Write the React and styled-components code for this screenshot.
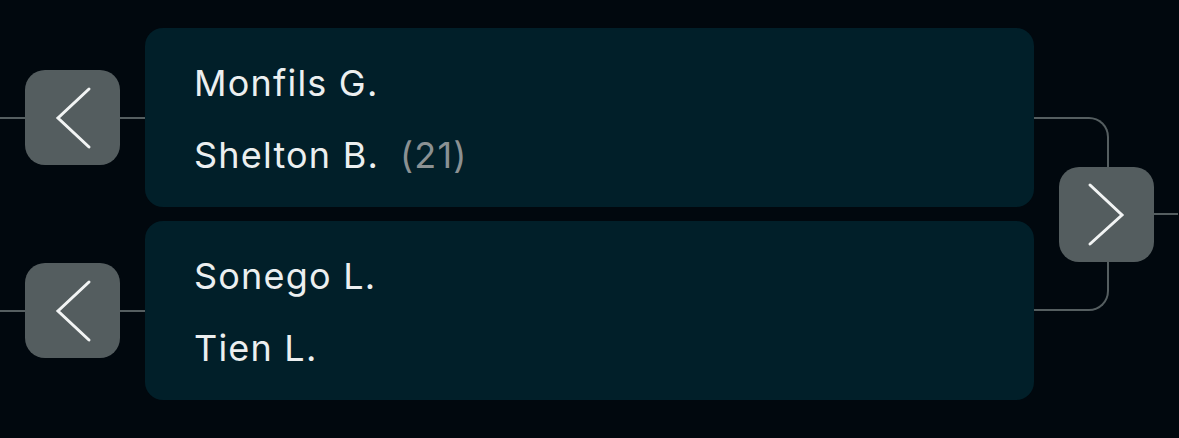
import styled, { createGlobalStyle } from 'styled-components';

const GlobalStyle = createGlobalStyle`
  html, body {
    margin: 0;
    padding: 0;
    background: #01080e;
  }
  body {
    font-family: Inter, "Noto Sans", sans-serif;
  }
`;

const matches = [
  {
    id: 1,
    players: [
      { name: 'Monfils G.' },
      { name: 'Shelton B.', seed: 21 },
    ],
  },
  {
    id: 2,
    players: [{ name: 'Sonego L.' }, { name: 'Tien L.' }],
  },
];

function Chevron({ dir }) {
  const d = dir === 'left' ? 'M64 19 L33 48 L64 77' : 'M31 18 L63 48 L31 77';
  return (
    <svg width="95" height="95" viewBox="0 0 95 95" fill="none">
      <path d={d} stroke="#f2f4f4" strokeWidth="3" strokeLinecap="round" strokeLinejoin="miter" />
    </svg>
  );
}

function App() {
  return (
    <>
      <GlobalStyle />
      <Page>
        <LeftColumn>
          {matches.map((m) => (
            <Slot key={m.id}>
              <Line $width={25} />
              <NavButton>
                <Chevron dir="left" />
              </NavButton>
              <Line $width={26} />
            </Slot>
          ))}
        </LeftColumn>

        <Cards>
          {matches.map((m) => (
            <Card key={m.id}>
              {m.players.map((p) => (
                <PlayerRow key={p.name}>
                  <PlayerName>{p.name}</PlayerName>
                  {p.seed && <Seed>({p.seed})</Seed>}
                </PlayerRow>
              ))}
            </Card>
          ))}
        </Cards>

        <RightPart>
          <Bracket />
          <NavButton $overlap>
            <Chevron dir="right" />
          </NavButton>
          <Line $width={24} />
        </RightPart>
      </Page>
    </>
  );
}

export default App;

const Page = styled.div`
  display: flex;
  align-items: center;
  width: 1179px;
  height: 438px;
  padding-top: 28px;
  padding-bottom: 38px;
  box-sizing: border-box;
  overflow: hidden;
`;

const LeftColumn = styled.div`
  display: flex;
  flex-direction: column;
  gap: 14px;
  width: 145px;
  flex-shrink: 0;
`;

const Slot = styled.div`
  display: flex;
  align-items: center;
  height: 179px;
`;

const Line = styled.div`
  width: ${(p) => p.$width}px;
  height: 2px;
  background: #555e60;
  flex-shrink: 0;
`;

const NavButton = styled.div`
  width: 95px;
  height: 95px;
  border-radius: 20px;
  background: #545d5f;
  flex-shrink: 0;
  display: flex;
  align-items: center;
  justify-content: center;
  margin-left: ${(p) => (p.$overlap ? '-50px' : '0')};
`;

const Cards = styled.div`
  display: flex;
  flex-direction: column;
  gap: 14px;
  width: 889px;
  flex-shrink: 0;
`;

const Card = styled.div`
  height: 179px;
  box-sizing: border-box;
  background: #011f29;
  border-radius: 18px;
  padding: 33px 0 0 49px;
  display: flex;
  flex-direction: column;
`;

const PlayerRow = styled.div`
  display: flex;
  align-items: baseline;
  gap: 21px;
  height: 72px;
  line-height: 44px;
`;

const PlayerName = styled.span`
  font-size: 36px;
  color: #eceff0;
  letter-spacing: 1.2px;
`;

const Seed = styled.span`
  font-size: 36px;
  color: #8b9193;
  letter-spacing: 1.2px;
`;

const RightPart = styled.div`
  display: flex;
  align-items: center;
  flex-shrink: 0;
`;

const Bracket = styled.div`
  width: 75px;
  height: 194px;
  box-sizing: border-box;
  border: 2px solid #555e60;
  border-left: none;
  border-radius: 0 20px 20px 0;
`;
